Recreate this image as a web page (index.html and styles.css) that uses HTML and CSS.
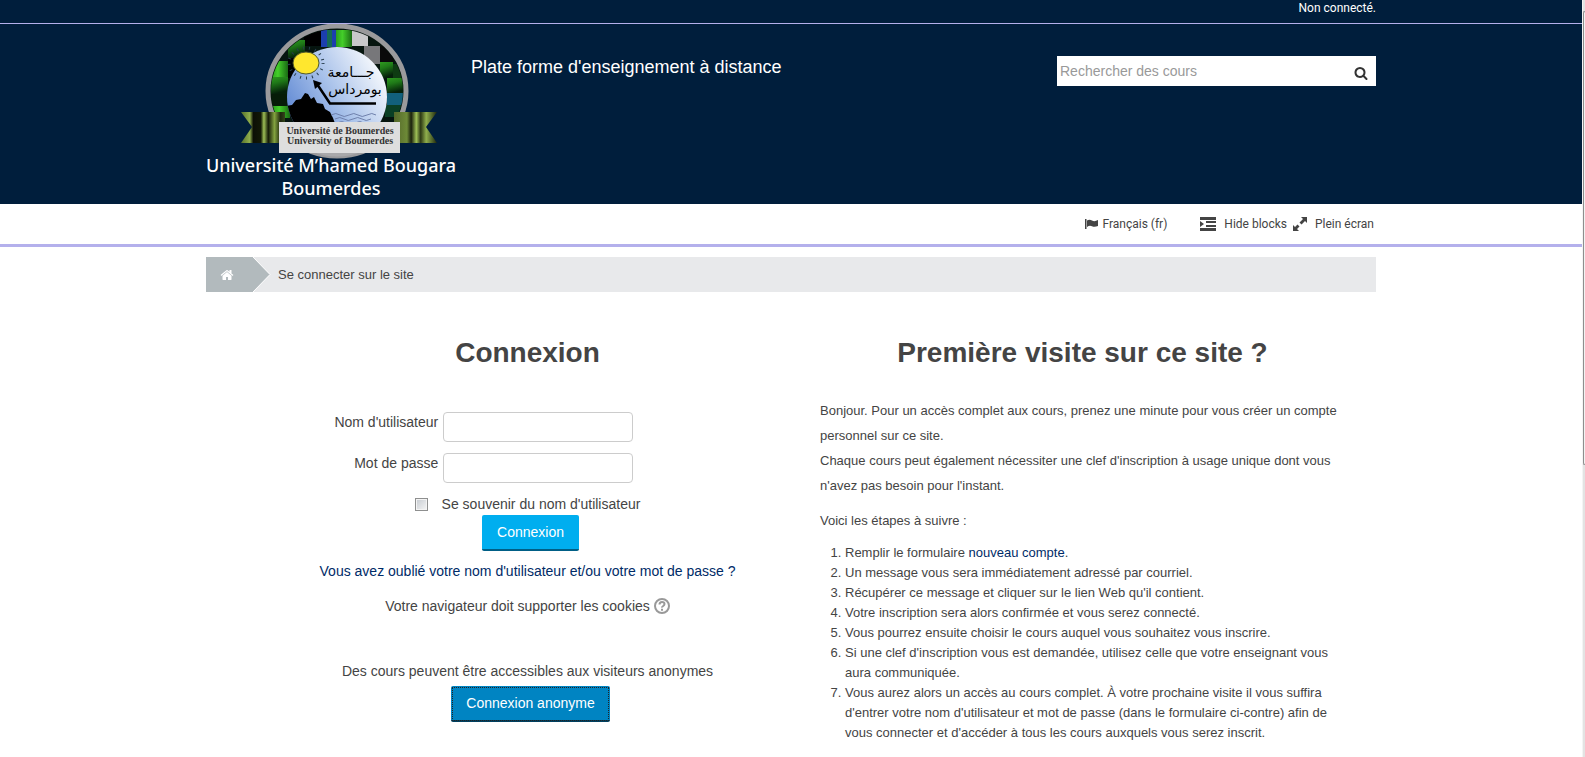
FILE: index.html
```
<!DOCTYPE html>
<html lang="fr">
<head>
    <meta charset="UTF-8">
    <meta name="viewport" content="width=device-width, initial-scale=1.0">
    <title>Se connecter sur le site</title>
    <link rel="stylesheet" href="styles.css">
</head>
<body>
    <div class="page">
        <div class="top-bar">
            <div class="container login-info">Non connecté.</div>
        </div>

        <header class="page-header">
            <div class="container header-row">
                <a class="logo" href="#">
                    <svg width="250" height="180" viewBox="0 0 250 180" role="img" aria-label="Université de Boumerdes">
                        <defs>
                            <linearGradient id="sky" x1="0" y1="0.8" x2="1" y2="0.2">
                                <stop offset="0" stop-color="#5580d0"/>
                                <stop offset="0.5" stop-color="#a9c2ea"/>
                                <stop offset="1" stop-color="#ffffff"/>
                            </linearGradient>
                            <linearGradient id="green" x1="0" y1="0" x2="0.3" y2="1">
                                <stop offset="0" stop-color="#2f9a20"/>
                                <stop offset="0.4" stop-color="#1f7a18"/>
                                <stop offset="1" stop-color="#05200a"/>
                            </linearGradient>
                            <linearGradient id="bright">
                                <stop offset="0" stop-color="#2a9d1c"/>
                                <stop offset="0.4" stop-color="#44cf2a"/>
                                <stop offset="1" stop-color="#1a6a14"/>
                            </linearGradient>
                            <linearGradient id="ribbon">
                                <stop offset="0" stop-color="#56702a"/>
                                <stop offset="0.2" stop-color="#8fae4c"/>
                                <stop offset="0.28" stop-color="#0c0f06"/>
                                <stop offset="0.45" stop-color="#121806"/>
                                <stop offset="0.52" stop-color="#9dbf55"/>
                                <stop offset="0.62" stop-color="#141a08"/>
                                <stop offset="0.76" stop-color="#83a33f"/>
                                <stop offset="0.9" stop-color="#1d260d"/>
                                <stop offset="1" stop-color="#34451a"/>
                            </linearGradient>
                            <linearGradient id="ribbon-right">
                                <stop offset="0" stop-color="#54682a"/>
                                <stop offset="0.3" stop-color="#6d8a37"/>
                                <stop offset="0.4" stop-color="#1a210c"/>
                                <stop offset="0.52" stop-color="#9dbf55"/>
                                <stop offset="0.62" stop-color="#2c3814"/>
                                <stop offset="0.75" stop-color="#8fae4c"/>
                                <stop offset="1" stop-color="#1c250d"/>
                            </linearGradient>
                            <clipPath id="ring"><ellipse cx="131" cy="67" rx="66" ry="62"/></clipPath>
                            <clipPath id="disc"><circle cx="131" cy="73" r="50"/></clipPath>
                        </defs>
                        <ellipse cx="131" cy="67" rx="69" ry="65" fill="#06150f" stroke="#9a9a9c" stroke-width="5"/>
                        <g clip-path="url(#ring)">
                            <rect x="98" y="4" width="17" height="18" fill="#000"/>
                            <rect x="115" y="6" width="15" height="17" fill="#1c3fae"/>
                            <rect x="121" y="6" width="5" height="17" fill="#166b56"/>
                            <rect x="130" y="6" width="16" height="17" fill="url(#bright)"/>
                            <rect x="146" y="6" width="16" height="16" fill="#c9c9cb"/>
                            <rect x="158" y="22" width="16" height="18" fill="#77777a"/>
                            <rect x="174" y="22" width="14" height="16" fill="#0a0a0a"/>
                            <rect x="82" y="16" width="17" height="18" fill="url(#green)"/>
                            <rect x="65" y="37" width="17" height="16" fill="url(#bright)"/>
                            <rect x="62" y="53" width="20" height="17" fill="url(#green)"/>
                            <rect x="62" y="70" width="19" height="12" fill="#061c08"/>
                            <rect x="66" y="82" width="18" height="12" fill="url(#bright)"/>
                            <rect x="82" y="34" width="10" height="20" fill="#000"/>
                            <rect x="174" y="38" width="13" height="16" fill="url(#green)"/>
                            <rect x="187" y="40" width="12" height="14" fill="#0e3b12"/>
                            <rect x="181" y="54" width="17" height="15" fill="url(#green)"/>
                            <rect x="181" y="69" width="17" height="12" fill="#12607c"/>
                            <rect x="179" y="81" width="17" height="12" fill="#0a3f25"/>
                        </g>
                        <circle cx="131" cy="73" r="50" fill="url(#sky)"/>
                        <g clip-path="url(#disc)">
                            <path d="M78 100V82l8-1 4-5 5-1 4-6 3 1 3 5 3-2 3 6 6 1 2 5 5 3 3 6 3 8z" fill="#000"/>
                            <g fill="none" stroke="#6f80ac" stroke-width="1">
                                <path d="M125 91q5-3 9 0t9 0 9 0 9 0 9 0"/>
                                <path d="M129 95q5-3 9 0t9 0 9 0 9 0"/>
                                <path d="M131 99q5-3 9 0t9 0 9 0"/>
                            </g>
                        </g>
                        <ellipse cx="100" cy="39" rx="17" ry="15" fill="none" stroke="#273d4d" stroke-width="3" stroke-dasharray="1 5"/>
                        <ellipse cx="100" cy="39" rx="13" ry="11" fill="#ffe72e" stroke="#51592a" stroke-width="1"/>
                        <path d="M170 79.500H124L111 60" fill="none" stroke="#000" stroke-width="2.500"/>
                        <path d="M107 56l9 3-7 6z" fill="#000"/>
                        <text class="logo-arabic" x="145" y="53" text-anchor="middle">جـــامعة</text>
                        <text class="logo-arabic" x="149" y="70" text-anchor="middle">بومرداس</text>
                        <path d="M35 88h44v31H35l11-16z" fill="url(#ribbon)"/>
                        <path d="M188 88h43l-11 15 11 16h-43z" fill="url(#ribbon-right)"/>
                        <path d="M107 128h48q-24 9-48 0z" fill="#a9a9ab"/>
                        <rect x="73" y="98" width="121" height="31" fill="#dedede"/>
                        <text class="logo-plate" x="134" y="110" text-anchor="middle">Université de Boumerdes</text>
                        <text class="logo-plate" x="134" y="120" text-anchor="middle">University of Boumerdes</text>
                        <text class="logo-name" x="125" y="148" text-anchor="middle">Université M’hamed Bougara</text>
                        <text class="logo-name" x="125" y="171" text-anchor="middle">Boumerdes</text>
                    </svg>
                </a>
                <p class="site-title">Plate forme d'enseignement à distance</p>
                <form class="search" role="search">
                    <input type="text" name="search" aria-label="Rechercher des cours" placeholder="Rechercher des cours">
                    <button type="button" aria-label="Rechercher">
                        <svg width="14" height="14" viewBox="0 0 1792 1792" fill="currentColor"><path d="M1216 832q0-185-131.500-316.500t-316.500-131.500-316.500 131.500-131.500 316.500 131.500 316.500 316.500 131.500 316.500-131.500 131.500-316.500zm512 832q0 52-38 90t-90 38q-54 0-90-38l-343-342q-179 124-399 124-143 0-273.500-55.500t-225-150-150-225-55.500-273.500 55.500-273.500 150-225 225-150 273.500-55.500 273.500 55.500 225 150 150 225 55.500 273.500q0 220-124 399l343 343q37 37 37 90z"/></svg>
                    </button>
                </form>
            </div>
        </header>

        <nav class="main-nav">
            <div class="container nav-row">
                <a class="nav-lang" href="#">
                    <svg width="13" height="10" viewBox="0 0 13 10" fill="currentColor"><path d="M0 0h1.500v10H0zM2 1.500q2.500-1.500 5 0t6-.5v6q-3.500 1.500-6 .3T2 8z"/></svg>
                    Français (fr)
                </a>
                <a class="nav-blocks" href="#">
                    <svg width="16" height="14" viewBox="0 0 16 14" fill="currentColor"><path d="M0 0h16v3H0zM6 4h10v2H6zM6 8h10v2H6zM0 11h16v3H0zM0 4l4 3-4 3z"/></svg>
                    Hide blocks
                </a>
                <a class="nav-blocks" href="#">
                    <svg width="14" height="14" viewBox="0 0 14 14" fill="currentColor"><path d="M8 0h6v6l-2-2-3.500 3.500-2-2L10 2zM6 14H0V8l2 2 2.500-2.500 2 2L4 12z"/></svg>
                    Plein écran
                </a>
            </div>
        </nav>

        <main class="container">
            <div class="breadcrumb">
                <a class="crumb-home" href="#" aria-label="Accueil">
                    <svg width="14" height="14" viewBox="0 0 1792 1792" fill="currentColor"><path d="M1472 992v480q0 26-19 45t-45 19h-384v-384h-256v384h-384q-26 0-45-19t-19-45v-480q0-1 .5-3t.5-3l575-474 575 474q1 2 1 6zm223-69l-62 74q-8 9-21 11h-3q-13 0-21-7l-692-577-692 577q-12 8-24 7-13-2-21-11l-62-74q-8-10-7-23.500t11-21.500l719-599q32-26 76-26t76 26l244 204v-195q0-14 9-23t23-9h192q14 0 23 9t9 23v408l219 182q10 8 11 21.500t-7 23.500z"/></svg>
                </a>
                <svg class="crumb-arrow" width="18" height="35" viewBox="0 0 18 35"><path d="M0 0l17 17.500L0 35z" fill="#b2babd"/><path d="M0 0l17 17.500L0 35" fill="none" stroke="#fff"/></svg>
                <span>Se connecter sur le site</span>
            </div>

            <div class="login-box">
                <!-- Formulaire de connexion -->
                <section class="login-panel">
                    <h2>Connexion</h2>
                    <form class="login-form">
                        <div class="field">
                            <label for="username">Nom d'utilisateur</label>
                            <input type="text" id="username" name="username">
                        </div>
                        <div class="field">
                            <label for="password">Mot de passe</label>
                            <input type="password" id="password" name="password">
                        </div>
                        <div class="remember">
                            <input type="checkbox" id="remember" name="remember">
                            <label for="remember">Se souvenir du nom d'utilisateur</label>
                        </div>
                        <button class="btn" type="button">Connexion</button>
                    </form>
                    <a class="forgot" href="#">Vous avez oublié votre nom d'utilisateur et/ou votre mot de passe ?</a>
                    <div class="cookies">
                        Votre navigateur doit supporter les cookies
                        <svg width="16" height="16" viewBox="0 0 16 16" fill="none" stroke="#999"><circle cx="8" cy="8" r="7" stroke-width="2"/><path d="M5.500 6.500q0-2.500 2.500-2.500t2.500 2q0 1.200-1.300 2T8 9.700M8 10.800v2" stroke-width="2"/></svg>
                    </div>
                    <div class="guest">Des cours peuvent être accessibles aux visiteurs anonymes</div>
                    <button class="btn btn-guest" type="button">Connexion anonyme</button>
                </section>

                <!-- Instructions pour créer un compte -->
                <section class="signup-panel">
                    <h2>Première visite sur ce site ?</h2>
                    <p>Bonjour. Pour un accès complet aux cours, prenez une minute pour vous créer un compte personnel sur ce site.<br>
                    Chaque cours peut également nécessiter une clef d'inscription à usage unique dont vous n'avez pas besoin pour l'instant.</p>
                    <p>Voici les étapes à suivre :</p>
                    <ol>
                        <li>Remplir le formulaire <a href="#">nouveau compte</a>.</li>
                        <li>Un message vous sera immédiatement adressé par courriel.</li>
                        <li>Récupérer ce message et cliquer sur le lien Web qu'il contient.</li>
                        <li>Votre inscription sera alors confirmée et vous serez connecté.</li>
                        <li>Vous pourrez ensuite choisir le cours auquel vous souhaitez vous inscrire.</li>
                        <li>Si une clef d'inscription vous est demandée, utilisez celle que votre enseignant vous aura communiquée.</li>
                        <li>Vous aurez alors un accès au cours complet. À votre prochaine visite il vous suffira d'entrer votre nom d'utilisateur et mot de passe (dans le formulaire ci-contre) afin de vous connecter et d'accéder à tous les cours auxquels vous serez inscrit.</li>
                    </ol>
                </section>
            </div>
        </main>
    </div>
    <div class="scroll-track"><div class="scroll-thumb"></div></div>
</body>
</html>
```

FILE: styles.css
```
* {
    box-sizing: border-box;
}
body {
    margin: 0;
    display: flex;
    min-height: 100vh;
    font-family: "Liberation Sans", Arial, sans-serif;
    font-size: 14px;
    line-height: 20px;
    color: #444;
    background-color: #fff;
}
a {
    color: #002b67;
    text-decoration: none;
}
button, input {
    font-family: inherit;
    font-size: 14px;
}
.page {
    flex: 1;
    min-width: 0;
}
.container {
    max-width: 1170px;
    margin: 0 auto;
}
.top-bar {
    height: 24px;
    background-color: #001e3c;
    border-bottom: 1px solid #b4b0ec;
}
.login-info {
    font-family: Roboto, sans-serif;
    font-size: 12px;
    line-height: 16px;
    text-align: right;
    color: #fff;
}
.page-header {
    background-color: #001e3c;
}
.header-row {
    display: flex;
    align-items: flex-start;
}
.logo svg {
    display: block;
}
.logo-arabic {
    font-family: "DejaVu Sans", sans-serif;
    font-size: 14px;
}
.logo-plate {
    font-family: "Liberation Serif", serif;
    font-size: 10px;
    font-weight: bold;
    fill: #333;
}
.logo-name {
    font-family: "Noto Sans", sans-serif;
    font-size: 18px;
    font-weight: 500;
    fill: #fff;
}
.site-title {
    margin: 33px 0 0 15px;
    font-size: 18px;
    color: #fff;
}
.search {
    display: flex;
    width: 319px;
    height: 30px;
    margin: 32px 0 0 auto;
    background-color: #fff;
}
.search input {
    flex: 1;
    min-width: 0;
    padding: 0 3px;
    border: 0;
    background: none;
}
.search input::placeholder {
    color: #999;
}
.search button {
    padding: 6px 8px 0;
    border: 0;
    background: none;
    color: #333;
}
.main-nav {
    border-bottom: 3px solid #b4b0ec;
}
.nav-row {
    display: flex;
    justify-content: flex-end;
    gap: 6px;
    height: 40px;
    padding-right: 2px;
    font-family: Roboto, sans-serif;
    font-size: 12px;
}
.nav-row a {
    display: flex;
    align-items: center;
    color: #444;
}
.nav-lang {
    gap: 4px;
    margin-right: 27px;
}
.nav-blocks {
    gap: 8px;
}
.breadcrumb {
    display: flex;
    align-items: center;
    height: 35px;
    margin-top: 10px;
    background-color: #e8e9eb;
    font-size: 13px;
    line-height: 19px;
}
.crumb-home {
    display: flex;
    align-items: center;
    width: 47px;
    height: 35px;
    padding-left: 14px;
    background-color: #b2babd;
    color: #fff;
}
.crumb-arrow {
    margin-right: 7px;
}
.login-box {
    display: grid;
    grid-template-columns: 1fr 1fr;
    gap: 30px;
    padding: 41px 31px 0 59px;
}
h2 {
    margin: 0 0 39px;
    font-size: 28px;
    line-height: 40px;
    text-align: center;
}
.login-panel {
    text-align: center;
}
.field {
    display: flex;
    gap: 5px;
    margin-bottom: 11px;
}
.field label {
    width: 33%;
    text-align: right;
}
.field input {
    width: 190px;
    height: 30px;
    border: 1px solid #ccc;
    border-radius: 4px;
}
.remember {
    display: flex;
    justify-content: center;
    align-items: center;
    gap: 14px;
    margin-bottom: 1px;
}
.remember input {
    appearance: none;
    width: 13px;
    height: 13px;
    margin: 0;
    border: 1px solid #8e8f8f;
    background: linear-gradient(135deg, #c5cad0, #f6f6f6);
    box-shadow: inset 0 0 0 1px #f4f4f4;
}
.btn {
    height: 36px;
    margin-left: 6px;
    padding: 0 15px;
    border: 0;
    border-bottom: 2px solid #005f86;
    border-radius: 2px;
    background-color: #00aeef;
    color: #fff;
}
.btn-guest {
    border-bottom-color: #00405f;
    background-color: #0084c2;
    outline: 1px dotted #222;
    outline-offset: -2px;
}
.login-form {
    margin-bottom: 10px;
}
.cookies {
    display: flex;
    justify-content: center;
    align-items: center;
    gap: 4px;
    margin: 15px 0 45px;
}
.guest {
    margin-bottom: 5px;
}
.signup-panel {
    font-size: 13px;
}
.signup-panel h2 {
    margin-bottom: 25px;
}
.signup-panel p {
    margin: 0 0 10px;
    line-height: 25px;
}
.signup-panel ol {
    margin: 0;
    padding-left: 25px;
}
.scroll-track {
    width: 3px;
    padding-top: 11px;
    border-left: 1px solid #f4f4f4;
    background-color: #e3e3e3;
}
.scroll-thumb {
    height: 60vh;
    border: 1px solid #8e8e8e;
    border-right: 0;
    border-radius: 2px 0 0 2px;
    background-color: #f2f2f2;
}
```
